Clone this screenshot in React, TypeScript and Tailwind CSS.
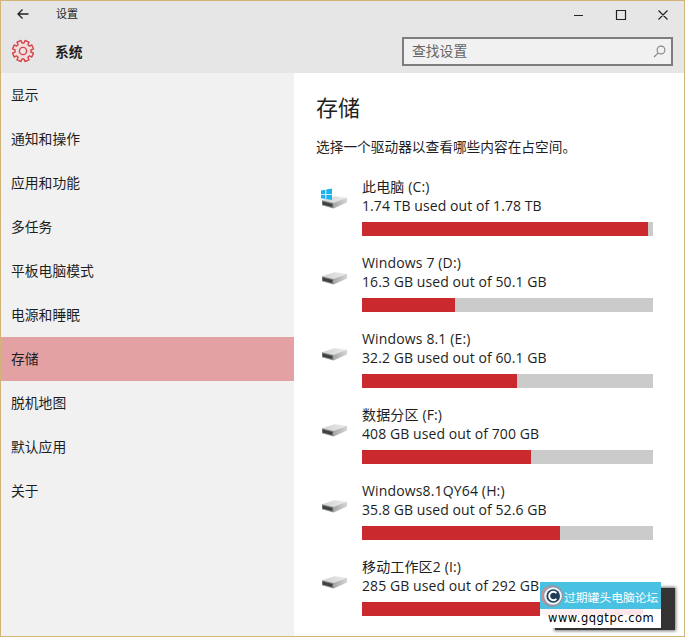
const navItems = ['显示', '通知和操作', '应用和功能', '多任务', '平板电脑模式', '电源和睡眠', '存储', '脱机地图', '默认应用', '关于'];

const drives = [
  { name: '此电脑 (C:)', usage: '1.74 TB used out of 1.78 TB', fill: 286, system: true },
  { name: 'Windows 7 (D:)', usage: '16.3 GB used out of 50.1 GB', fill: 93 },
  { name: 'Windows 8.1 (E:)', usage: '32.2 GB used out of 60.1 GB', fill: 154.5 },
  { name: '数据分区 (F:)', usage: '408 GB used out of 700 GB', fill: 169 },
  { name: 'Windows8.1QY64 (H:)', usage: '35.8 GB used out of 52.6 GB', fill: 198 },
  { name: '移动工作区2 (I:)', usage: '285 GB used out of 292 GB', fill: 284 },
];

function gearPath() {
  const points: string[] = [];
  for (let i = 0; i < 8; i++) {
    const base = (i * 45 - 90 + 22.5) * (Math.PI / 180);
    const shape: [number, number][] = [[-0.27, 8], [-0.2, 10.7], [0.2, 10.7], [0.27, 8]];
    for (const [a, r] of shape) {
      points.push(`${(12 + r * Math.cos(base + a)).toFixed(2)} ${(12 + r * Math.sin(base + a)).toFixed(2)}`);
    }
  }
  return `M${points.join('L')}Z`;
}

function GearIcon() {
  return (
    <svg className="h-6 w-6" viewBox="0 0 24 24" fill="none" stroke="#d2474c" strokeWidth="1.4" strokeLinejoin="round">
      <path d={gearPath()} fill="#f3dcdc" />
      <circle cx="12" cy="12" r="3.6" fill="#ebe4e4" />
    </svg>
  );
}

function DriveIcon({ system }: { system?: boolean }) {
  return (
    <svg className="h-6 w-7" viewBox="0 0 28 24">
      <defs>
        <linearGradient id="top" x1="0" y1="0" x2="1" y2="0">
          <stop offset="0" stopColor="#d0d1d1" />
          <stop offset="1" stopColor="#ececec" />
        </linearGradient>
        <linearGradient id="side" x1="0" y1="0" x2="1" y2="0">
          <stop offset="0" stopColor="#a5a6a6" />
          <stop offset="1" stopColor="#d6d6d6" />
        </linearGradient>
      </defs>
      <path d="M2 13.2L14.5 9.3L27 10.8L14 16.2Z" fill="url(#top)" />
      <path d="M13.5 16L27 10.8V15.6L13.5 21.5Z" fill="url(#side)" />
      <path d="M2 13.2L13.7 16V21.5L2 18.2Z" fill="#848686" />
      <path d="M2.6 14.5L12.4 17V20L2.6 17.5Z" fill="#3d4140" />
      {system && (
        <path
          d="M1 3.5L5.4 2.7V7H1ZM6.3 2.5L12 1.6V7H6.3ZM1 7.8H5.4V12L1 11.3ZM6.3 7.8H12V13L6.3 12.1Z"
          fill="#1cb2ee"
        />
      )}
    </svg>
  );
}

function Watermark() {
  return (
    <div className="absolute left-[539px] top-[581px] h-[49px] w-[136px]">
      <div className="absolute left-[15px] top-[6px] h-[42px] w-[120px] bg-[#333333] shadow-[0_0_3px_1px_#777]" />
      <div className="relative w-[121px]">
        <div className="flex h-[27px] items-center bg-[#48c1e3]">
          <svg className="ml-px h-[24px] w-[23px] shrink-0" viewBox="0 0 23 23">
            <circle cx="11.2" cy="11.5" r="11" fill="#8e99a9" />
            <path d="M4 18.5A9.8 9.8 0 0 1 7 2.5" stroke="#c98f9d" strokeWidth="1.8" fill="none" />
            <circle cx="12" cy="11.5" r="8.8" fill="#eef4f7" />
            <circle cx="12.2" cy="11.5" r="6.8" fill="#1f3d59" />
            <path d="M15.4 8.6A4.2 4.2 0 1 0 15.4 14.4" stroke="#fff" strokeWidth="2" fill="none" />
          </svg>
          <span className="mt-[3px] whitespace-nowrap font-['Noto_Sans_CJK_SC',sans-serif] text-[11.8px] leading-[16px] text-white">过期罐头电脑论坛</span>
        </div>
        <div className="flex h-[19px] items-center bg-white bg-[linear-gradient(90deg,#fff4f4_0px,#fbe4e8_103px,#fff_103px)] bg-[length:100%_6px] bg-no-repeat pl-[8px] font-['DejaVu_Sans',sans-serif] text-[11.5px] tracking-[0.52px] text-black">
          www.gqgtpc.com
        </div>
      </div>
    </div>
  );
}

export default function App() {
  return (
    <div className="relative flex h-[637px] w-[685px] flex-col overflow-hidden border border-[#d3b478] bg-white font-['Open_Sans','Noto_Sans_CJK_SC',sans-serif] text-[13.8px] text-[#1e1e1e]">
      <header className="h-[72px] shrink-0 bg-[#e6e6e6]">
        <div className="flex h-[26px] items-center">
          <svg className="ml-[16px] h-[12px] w-[12px]" viewBox="0 0 12 12" fill="none" stroke="#222" strokeWidth="1.3">
            <path d="M11.5 6H1M5.5 1.5L1 6L5.5 10.5" />
          </svg>
          <span className="ml-[27px] text-[11px]">设置</span>
          <svg className="ml-auto mr-[16px] h-[12px] w-[96px]" viewBox="0 0 96 12" fill="none" stroke="#222" strokeWidth="1.2">
            <path d="M2 7.5H11M44.5 2.5H53.5V11.5H44.5ZM86.5 2.5L95.5 11.5M95.5 2.5L86.5 11.5" />
          </svg>
        </div>
        <div className="flex h-[46px] items-start">
          <div className="ml-[10px] mt-[12px]"><GearIcon /></div>
          <span className="ml-[20px] mt-[15px] font-bold leading-[20px]">系统</span>
          <div className="ml-auto mr-[11px] mt-[10px] flex h-[29px] w-[271px] items-center justify-between border-2 border-[#7d7d7d] bg-[#f1f1f1] pl-[8px] pr-[5px] text-[#666]">
            <span>查找设置</span>
            <svg className="h-[13px] w-[13px]" viewBox="0 0 13 13" fill="none" stroke="#858585" strokeWidth="1.1">
              <circle cx="8" cy="5" r="3.9" />
              <path d="M5.2 7.8L1 12" />
            </svg>
          </div>
        </div>
      </header>
      <div className="flex min-h-0 flex-1">
        <nav className="w-[293px] shrink-0 bg-[#f1f1f1]">
          {navItems.map((item) => (
            <div key={item} className={`flex h-[44px] items-center pl-[10px] ${item === '存储' ? 'bg-[#e3a1a3]' : ''}`}>
              {item}
            </div>
          ))}
        </nav>
        <main className="flex-1 pl-[22px]">
          <h1 className="mt-[17px] text-[22px] leading-[34px]">存储</h1>
          <p className="mt-[13px] text-[13.7px] leading-[20px]">选择一个驱动器以查看哪些内容在占空间。</p>
          <ul className="mt-[22px]">
            {drives.map((drive) => (
              <li key={drive.name} className="flex h-[76px]">
                <div className="ml-[4px] mt-[8px] w-[42px]"><DriveIcon system={drive.system} /></div>
                <div>
                  <div className="h-[18px] whitespace-nowrap text-[14px] leading-[16px] tracking-[0.15px]">{drive.name}</div>
                  <div className="h-[18px] whitespace-nowrap text-[14px] leading-[18px] tracking-[0.08px]">{drive.usage}</div>
                  <div className="mt-[7px] h-[14px] w-[291px] bg-[#cbcbcb]">
                    <div className="h-full bg-[#ca292e]" style={{ width: drive.fill }} />
                  </div>
                </div>
              </li>
            ))}
          </ul>
        </main>
      </div>
      <Watermark />
    </div>
  );
}
